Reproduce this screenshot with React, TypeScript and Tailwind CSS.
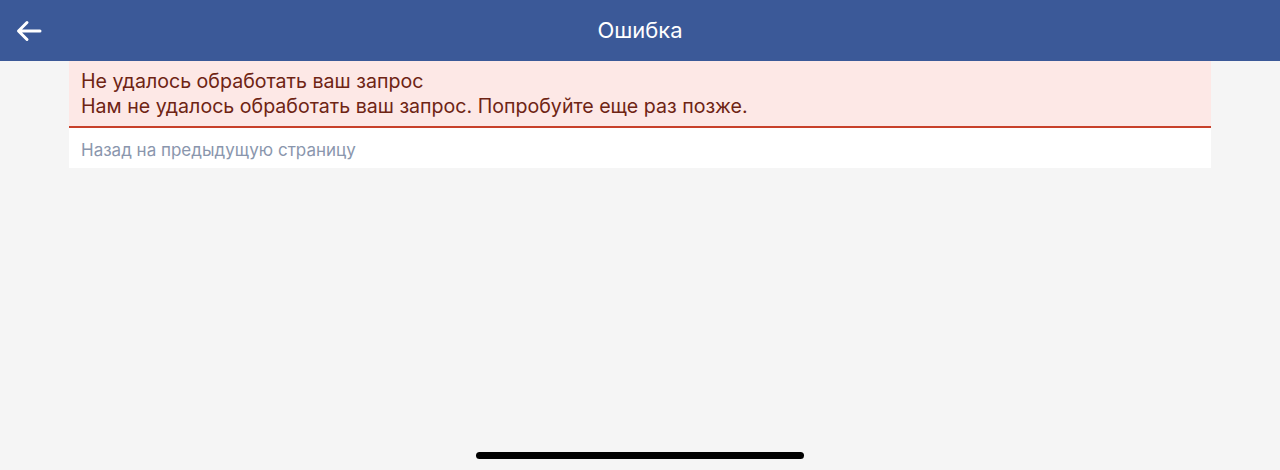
export default function App() {
  return (
    <div
      className="flex h-[470px] w-full flex-col bg-[#f5f5f5]"
      style={{ fontFamily: 'Inter, "Liberation Sans", Arial, sans-serif' }}
    >
      {/* Header */}
      <div className="relative flex h-[61px] shrink-0 items-center justify-center bg-[#3b5998]">
        <button className="absolute left-[16px] top-[20px] text-white">
          <svg width="26" height="22" viewBox="0 0 26 22" fill="none">
            <path
              d="M24 11H3M11 2.5L2.5 11L11 19.5"
              stroke="white"
              strokeWidth="3"
              strokeLinecap="round"
              strokeLinejoin="round"
            />
          </svg>
        </button>
        <h1 className="text-[22px] text-white">Ошибка</h1>
      </div>

      {/* Error box */}
      <div className="mx-[69px] flex flex-col">
        <div className="border-b-2 border-[#c8402a] bg-[#fde8e6] px-[12px] pb-[7px] pt-[8px] text-[19.6px] leading-[25px] text-[#6e2414]">
          <p>Не удалось обработать ваш запрос</p>
          <p>Нам не удалось обработать ваш запрос. Попробуйте еще раз позже.</p>
        </div>
        <div className="bg-white px-[12px] pb-[8px] pt-[12px] text-[17px] leading-[20px] text-[#8a96ad]">
          Назад на предыдущую страницу
        </div>
      </div>

      <div className="flex-1" />

      {/* Home indicator */}
      <div className="flex justify-center pb-[11px]">
        <div className="h-[7px] w-[328px] rounded-full bg-black" />
      </div>
    </div>
  );
}
